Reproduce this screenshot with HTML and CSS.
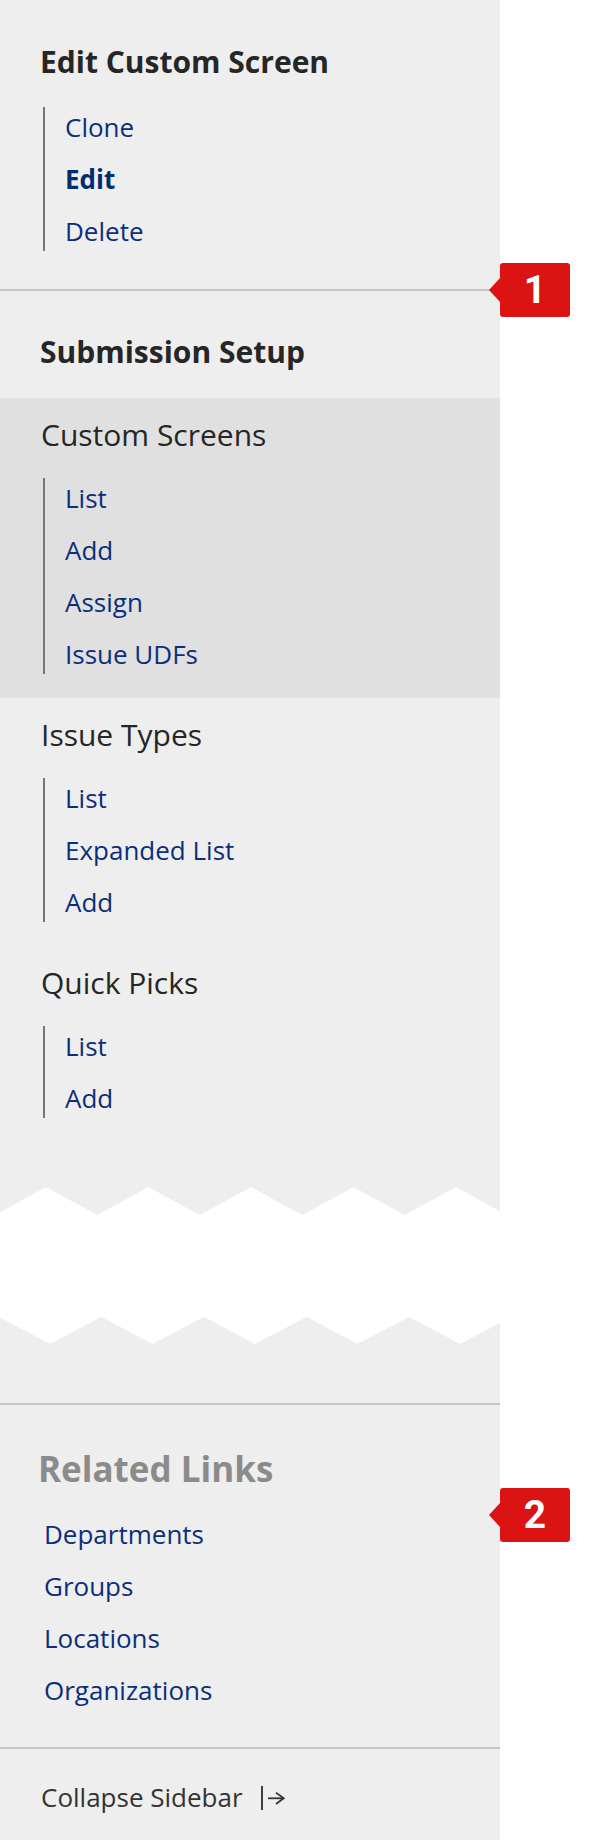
FILE: index.html
```html
<!DOCTYPE html>
<html lang="en">
<head>
<meta charset="utf-8">
<title>Sidebar</title>
<link rel="stylesheet" href="styles.css">
</head>
<body>
<div class="page">
  <aside class="sidebar">
    <section class="block block-top">
      <h2 class="title">Edit Custom Screen</h2>
      <ul class="sublist">
        <li><a href="#" class="link">Clone</a></li>
        <li><a href="#" class="link current">Edit</a></li>
        <li><a href="#" class="link">Delete</a></li>
      </ul>
    </section>
    <hr class="divider">
    <section class="setup">
      <h2 class="title setup-title">Submission Setup</h2>
      <div class="group active">
        <h3 class="group-title">Custom Screens</h3>
        <ul class="sublist">
          <li><a href="#" class="link">List</a></li>
          <li><a href="#" class="link">Add</a></li>
          <li><a href="#" class="link">Assign</a></li>
          <li><a href="#" class="link">Issue UDFs</a></li>
        </ul>
      </div>
      <div class="group">
        <h3 class="group-title">Issue Types</h3>
        <ul class="sublist">
          <li><a href="#" class="link">List</a></li>
          <li><a href="#" class="link">Expanded List</a></li>
          <li><a href="#" class="link">Add</a></li>
        </ul>
      </div>
      <div class="group">
        <h3 class="group-title">Quick Picks</h3>
        <ul class="sublist">
          <li><a href="#" class="link">List</a></li>
          <li><a href="#" class="link">Add</a></li>
        </ul>
      </div>
    </section>
    <div class="tear">
      <svg class="tear-svg" width="500" height="261" viewBox="0 0 500 261" aria-hidden="true">
        <polygon fill="#ffffff" stroke="#ffffff" stroke-width="1.5" stroke-linejoin="round"
          points="-5.25,74 46,46 97.25,74 148.5,46 199.75,74 251,46 302.25,74 353.5,46 404.75,74 456,46 507.25,74 511.5,174 460,201 409,174 357.5,201 306.5,174 255,201 204,174 152.5,201 101.5,174 50,201 -1,174"/>
      </svg>
    </div>
    <hr class="divider">
    <section class="related">
      <h2 class="related-title">Related Links</h2>
      <ul class="related-list">
        <li><a href="#" class="link">Departments</a></li>
        <li><a href="#" class="link">Groups</a></li>
        <li><a href="#" class="link">Locations</a></li>
        <li><a href="#" class="link">Organizations</a></li>
      </ul>
    </section>
    <hr class="divider">
    <div class="collapse">
      <span class="collapse-text">Collapse Sidebar</span>
      <svg class="collapse-icon" width="26" height="26" viewBox="0 0 26 26" aria-hidden="true">
        <line x1="2" y1="2" x2="2" y2="26" stroke="#333333" stroke-width="1.9"/>
        <line x1="8" y1="14.3" x2="24" y2="14.3" stroke="#333333" stroke-width="1.8"/>
        <polyline points="16,8.6 23.7,14.3 16,20" fill="none" stroke="#333333" stroke-width="1.8"/>
      </svg>
    </div>
  </aside>
  <span class="badge badge-1">1</span>
  <span class="badge badge-2">2</span>
</div>
</body>
</html>
```

FILE: styles.css
```css
* {
  box-sizing: border-box;
}

html, body {
  margin: 0;
  padding: 0;
  background: #ffffff;
}

body {
  font-family: "Open Sans", "Noto Sans", "Liberation Sans", sans-serif;
  color: #2b2b2b;
}

.page {
  position: relative;
  width: 600px;
  min-height: 1840px;
}

.sidebar {
  width: 500px;
  min-height: 1840px;
  background: #eeeeee;
  display: flex;
  flex-direction: column;
}

ul {
  list-style: none;
  margin: 0;
  padding: 0;
}

h2, h3 {
  margin: 0;
}

.link {
  color: #0b2f7a;
  text-decoration: none;
  font-size: 26px;
  line-height: 40px;
}

.link.current {
  font-weight: 700;
  color: #022c72;
}

.block-top {
  padding: 42px 0 38px 40px;
}

.title {
  font-size: 30px;
  font-weight: 700;
  line-height: 40px;
  color: #262626;
}

.sublist {
  display: flex;
  flex-direction: column;
  gap: 12px;
  margin-left: 3px;
  padding-left: 20px;
  border-left: 2px solid #777777;
}

.sublist li {
  height: 40px;
  line-height: 40px;
}

.block-top .title {
  margin-bottom: 25px;
}

.divider {
  border: 0;
  margin: 0;
  height: 2px;
  background: #c4c4c4;
  width: 500px;
}

.setup {
  padding-top: 41px;
}

.setup-title {
  padding-left: 40px;
  margin-bottom: 26px;
}

.group {
  padding: 17px 0 24px 41px;
}

.group.active {
  background: #e0e0e0;
}

.group-title {
  font-size: 30px;
  font-weight: 400;
  line-height: 40px;
  color: #262626;
  margin-bottom: 23px;
}

.group .sublist {
  margin-left: 2px;
}

.tear {
  height: 261px;
  line-height: 0;
}

.tear-svg {
  display: block;
}

.related {
  padding: 42px 0 37px 38px;
}

.related-title {
  font-size: 35px;
  font-weight: 700;
  line-height: 44px;
  color: #8b8b8b;
  margin-bottom: 23px;
}

.related-list {
  display: flex;
  flex-direction: column;
  gap: 12px;
  padding-left: 6px;
}

.related-list li {
  height: 40px;
  line-height: 40px;
}

.collapse {
  display: flex;
  align-items: center;
  padding: 28px 0 0 41px;
  height: 68px;
}

.collapse-text {
  font-size: 26px;
  line-height: 40px;
  color: #333333;
}

.collapse-icon {
  margin-left: 17px;
  display: block;
}

.badge {
  position: absolute;
  left: 500px;
  width: 70px;
  height: 54px;
  background: #dc1313;
  border-radius: 3px;
  color: #ffffff;
  font-family: Roboto, "Liberation Sans", sans-serif;
  font-weight: 700;
  font-size: 39px;
  line-height: 54px;
  text-align: center;
}

.badge::before {
  content: "";
  position: absolute;
  left: -11px;
  top: 15px;
  border-right: 11px solid #dc1313;
  border-top: 12px solid transparent;
  border-bottom: 12px solid transparent;
}

.badge-1 {
  top: 263px;
}

.badge-2 {
  top: 1488px;
}
```
